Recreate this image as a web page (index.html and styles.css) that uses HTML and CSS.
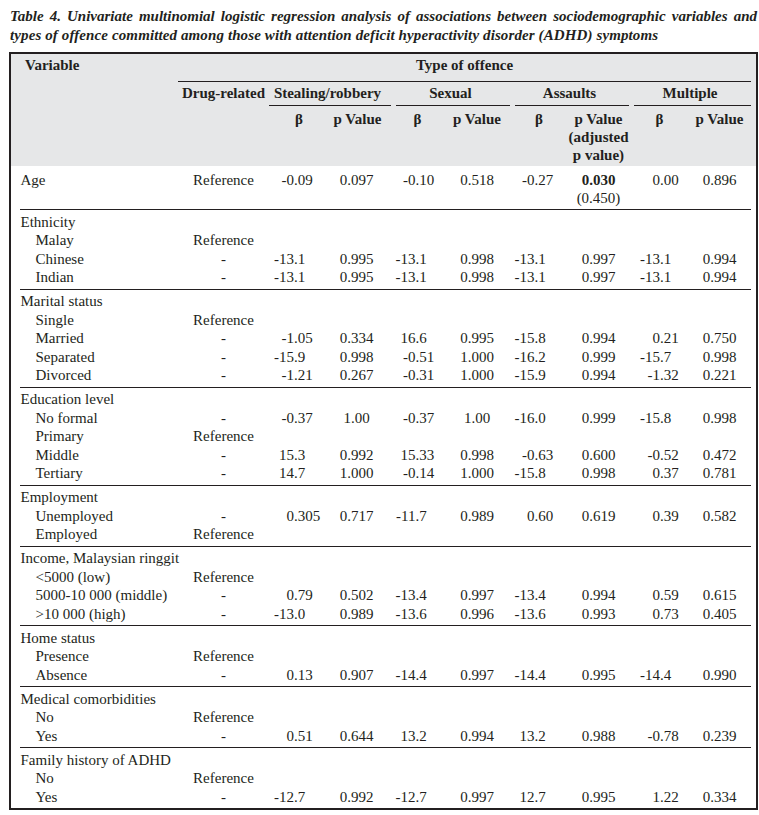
FILE: index.html
```html
<!DOCTYPE html>
<html lang="en">
<head>
<meta charset="utf-8">
<title>Table 4</title>
<link rel="stylesheet" href="styles.css">
</head>
<body>
<div class="page">
  <p class="title"><span class="l1">Table 4. Univariate multinomial logistic regression analysis of associations between sociodemographic variables and</span><span class="l2">types of offence committed among those with attention deficit hyperactivity disorder (ADHD) symptoms</span></p>
  <div class="box">
    <div class="head">
      <table class="t">
        <colgroup>
          <col class="w1"><col class="w2"><col class="w3"><col class="w4"><col class="w5"><col class="w6"><col class="w7"><col class="w8"><col class="w9"><col class="w10">
        </colgroup>
        <tr class="r1">
          <th class="var" rowspan="3">Variable</th>
          <th class="too" colspan="9">Type of offence</th>
        </tr>
        <tr class="r2">
          <th class="drug" rowspan="2">Drug-related</th>
          <th colspan="2"><div class="gl first">Stealing/robbery</div></th>
          <th colspan="2"><div class="gl">Sexual</div></th>
          <th colspan="2"><div class="gl">Assaults</div></th>
          <th colspan="2"><div class="gl last">Multiple</div></th>
        </tr>
        <tr class="r3">
          <th class="hb1">β</th>
          <th class="hp1">p Value</th>
          <th>β</th>
          <th>p Value</th>
          <th>β</th>
          <th>p Value<br>(adjusted<br>p value)</th>
          <th>β</th>
          <th>p Value</th>
        </tr>
      </table>
    </div>
    <div class="body">
      <table class="t">
        <colgroup>
          <col class="w1"><col class="w2"><col class="w3"><col class="w4"><col class="w5"><col class="w6"><col class="w7"><col class="w8"><col class="w9"><col class="w10">
        </colgroup>
        <tbody class="age">
          <tr><td class="v">Age</td><td class="c">Reference</td><td class="b"><span class="ip">-0</span>.09</td><td class="p">0.097</td><td class="b"><span class="ip">-0</span>.10</td><td class="p">0.518</td><td class="b"><span class="ip">-0</span>.27</td><td class="p"><b>0.030</b><br>(0.450)</td><td class="b"><span class="ip">0</span>.00</td><td class="p">0.896</td></tr>
        </tbody>
        <tbody>
          <tr><td class="v" colspan="10">Ethnicity</td></tr>
          <tr><td class="s">Malay</td><td class="c">Reference</td><td colspan="8"></td></tr>
          <tr><td class="s">Chinese</td><td class="c">-</td><td class="b"><span class="ip">-13</span>.1</td><td class="p">0.995</td><td class="b"><span class="ip">-13</span>.1</td><td class="p">0.998</td><td class="b"><span class="ip">-13</span>.1</td><td class="p">0.997</td><td class="b"><span class="ip">-13</span>.1</td><td class="p">0.994</td></tr>
          <tr><td class="s">Indian</td><td class="c">-</td><td class="b"><span class="ip">-13</span>.1</td><td class="p">0.995</td><td class="b"><span class="ip">-13</span>.1</td><td class="p">0.998</td><td class="b"><span class="ip">-13</span>.1</td><td class="p">0.997</td><td class="b"><span class="ip">-13</span>.1</td><td class="p">0.994</td></tr>
        </tbody>
        <tbody>
          <tr><td class="v" colspan="10">Marital status</td></tr>
          <tr><td class="s">Single</td><td class="c">Reference</td><td colspan="8"></td></tr>
          <tr><td class="s">Married</td><td class="c">-</td><td class="b"><span class="ip">-1</span>.05</td><td class="p">0.334</td><td class="b"><span class="ip">16</span>.6</td><td class="p">0.995</td><td class="b"><span class="ip">-15</span>.8</td><td class="p">0.994</td><td class="b"><span class="ip">0</span>.21</td><td class="p">0.750</td></tr>
          <tr><td class="s">Separated</td><td class="c">-</td><td class="b"><span class="ip">-15</span>.9</td><td class="p">0.998</td><td class="b"><span class="ip">-0</span>.51</td><td class="p">1.000</td><td class="b"><span class="ip">-16</span>.2</td><td class="p">0.999</td><td class="b"><span class="ip">-15</span>.7</td><td class="p">0.998</td></tr>
          <tr><td class="s">Divorced</td><td class="c">-</td><td class="b"><span class="ip">-1</span>.21</td><td class="p">0.267</td><td class="b"><span class="ip">-0</span>.31</td><td class="p">1.000</td><td class="b"><span class="ip">-15</span>.9</td><td class="p">0.994</td><td class="b"><span class="ip">-1</span>.32</td><td class="p">0.221</td></tr>
        </tbody>
        <tbody>
          <tr><td class="v" colspan="10">Education level</td></tr>
          <tr><td class="s">No formal</td><td class="c">-</td><td class="b"><span class="ip">-0</span>.37</td><td class="p">1.00</td><td class="b"><span class="ip">-0</span>.37</td><td class="p">1.00</td><td class="b"><span class="ip">-16</span>.0</td><td class="p">0.999</td><td class="b"><span class="ip">-15</span>.8</td><td class="p">0.998</td></tr>
          <tr><td class="s">Primary</td><td class="c">Reference</td><td colspan="8"></td></tr>
          <tr><td class="s">Middle</td><td class="c">-</td><td class="b"><span class="ip">15</span>.3</td><td class="p">0.992</td><td class="b"><span class="ip">15</span>.33</td><td class="p">0.998</td><td class="b"><span class="ip">-0</span>.63</td><td class="p">0.600</td><td class="b"><span class="ip">-0</span>.52</td><td class="p">0.472</td></tr>
          <tr><td class="s">Tertiary</td><td class="c">-</td><td class="b"><span class="ip">14</span>.7</td><td class="p">1.000</td><td class="b"><span class="ip">-0</span>.14</td><td class="p">1.000</td><td class="b"><span class="ip">-15</span>.8</td><td class="p">0.998</td><td class="b"><span class="ip">0</span>.37</td><td class="p">0.781</td></tr>
        </tbody>
        <tbody>
          <tr><td class="v" colspan="10">Employment</td></tr>
          <tr><td class="s">Unemployed</td><td class="c">-</td><td class="b"><span class="ip">0</span>.305</td><td class="p">0.717</td><td class="b"><span class="ip">-11</span>.7</td><td class="p">0.989</td><td class="b"><span class="ip">0</span>.60</td><td class="p">0.619</td><td class="b"><span class="ip">0</span>.39</td><td class="p">0.582</td></tr>
          <tr><td class="s">Employed</td><td class="c">Reference</td><td colspan="8"></td></tr>
        </tbody>
        <tbody>
          <tr><td class="v" colspan="10">Income, Malaysian ringgit</td></tr>
          <tr><td class="s">&lt;5000 (low)</td><td class="c">Reference</td><td colspan="8"></td></tr>
          <tr><td class="s">5000-10 000 (middle)</td><td class="c">-</td><td class="b"><span class="ip">0</span>.79</td><td class="p">0.502</td><td class="b"><span class="ip">-13</span>.4</td><td class="p">0.997</td><td class="b"><span class="ip">-13</span>.4</td><td class="p">0.994</td><td class="b"><span class="ip">0</span>.59</td><td class="p">0.615</td></tr>
          <tr><td class="s">&gt;10 000 (high)</td><td class="c">-</td><td class="b"><span class="ip">-13</span>.0</td><td class="p">0.989</td><td class="b"><span class="ip">-13</span>.6</td><td class="p">0.996</td><td class="b"><span class="ip">-13</span>.6</td><td class="p">0.993</td><td class="b"><span class="ip">0</span>.73</td><td class="p">0.405</td></tr>
        </tbody>
        <tbody>
          <tr><td class="v" colspan="10">Home status</td></tr>
          <tr><td class="s">Presence</td><td class="c">Reference</td><td colspan="8"></td></tr>
          <tr><td class="s">Absence</td><td class="c">-</td><td class="b"><span class="ip">0</span>.13</td><td class="p">0.907</td><td class="b"><span class="ip">-14</span>.4</td><td class="p">0.997</td><td class="b"><span class="ip">-14</span>.4</td><td class="p">0.995</td><td class="b"><span class="ip">-14</span>.4</td><td class="p">0.990</td></tr>
        </tbody>
        <tbody>
          <tr><td class="v" colspan="10">Medical comorbidities</td></tr>
          <tr><td class="s">No</td><td class="c">Reference</td><td colspan="8"></td></tr>
          <tr><td class="s">Yes</td><td class="c">-</td><td class="b"><span class="ip">0</span>.51</td><td class="p">0.644</td><td class="b"><span class="ip">13</span>.2</td><td class="p">0.994</td><td class="b"><span class="ip">13</span>.2</td><td class="p">0.988</td><td class="b"><span class="ip">-0</span>.78</td><td class="p">0.239</td></tr>
        </tbody>
        <tbody>
          <tr><td class="v" colspan="10">Family history of ADHD</td></tr>
          <tr><td class="s">No</td><td class="c">Reference</td><td colspan="8"></td></tr>
          <tr><td class="s">Yes</td><td class="c">-</td><td class="b"><span class="ip">-12</span>.7</td><td class="p">0.992</td><td class="b"><span class="ip">-12</span>.7</td><td class="p">0.997</td><td class="b"><span class="ip">12</span>.7</td><td class="p">0.995</td><td class="b"><span class="ip">1</span>.22</td><td class="p">0.334</td></tr>
        </tbody>
      </table>
    </div>
  </div>
</div>
</body>
</html>
```
FILE: styles.css
```css
html, body {
  margin: 0;
  padding: 0;
  background: #fff;
}
body {
  color: #231f20;
  font-family: "Liberation Serif", "Times New Roman", serif;
  font-size: 15px;
}
.page {
  width: 749px;
  margin-left: 9px;
  padding-top: 6.5px;
}
.title {
  margin: 0 1px 7.5px 1px;
  font-weight: bold;
  font-style: italic;
  line-height: 19px;
  letter-spacing: 0.11px;
}
.title .l1 {
  display: block;
  text-align: justify;
  text-align-last: justify;
  letter-spacing: 0;
}
.title .l2 {
  display: block;
}
.box {
  border: 2px solid #231f20;
}
.head {
  background: #e6e7e8;
  padding: 0 5px 0 9px;
}
.body {
  padding: 0 5px 0 9px;
}
.t {
  width: 731px;
  table-layout: fixed;
  border-collapse: collapse;
  border-spacing: 0;
}
.w1 { width: 158px; }
.w2 { width: 91px; }
.w3 { width: 55px; }
.w4 { width: 69px; }
.w5 { width: 49px; }
.w6 { width: 70px; }
.w7 { width: 54px; }
.w8 { width: 65px; }
.w9 { width: 57px; }
.w10 { width: 63px; }

th {
  padding: 0;
  font-weight: bold;
  line-height: 18.5px;
  vertical-align: top;
  text-align: center;
  white-space: nowrap;
}
.r1 th {
  padding-top: 2.4px;
  padding-bottom: 6px;
}
.r1 .var {
  text-align: left;
  padding-left: 5px;
}
.r1 .too {
  border-bottom: 1px solid #231f20;
}
.r2 th {
  padding-top: 2px;
}
.gl {
  margin: 0 2px 0 3px;
  padding: 0 5px 2.8px 0;
  border-bottom: 1px solid #231f20;
}
.gl.first { margin-left: 0; }
.gl.last { margin-right: 0; }
.r3 th {
  padding-top: 3.5px;
  padding-bottom: 1.4px;
  line-height: 18.3px;
}
.r3 .hb1 { padding-left: 5px; }
.r3 .hp1 { padding-right: 2px; }

td {
  padding: 0;
  line-height: 18.5px;
  vertical-align: top;
  white-space: nowrap;
}
tbody + tbody {
  border-top: 1px solid #231f20;
}
tbody tr:first-child td { padding-top: 2.5px; }
tbody tr:last-child td { padding-bottom: 2px; }
tbody.age tr td {
  padding-top: 5px;
  padding-bottom: 1.5px;
}
td.v { padding-left: 0.5px; }
td.s { padding-left: 15.5px; }
td.c { text-align: center; }
td.p { text-align: center; }
td.p:nth-child(4) { padding-right: 4px; }
td.b { text-align: left; }
.ip {
  display: inline-block;
  text-align: right;
}
td:nth-child(3) .ip { width: 25px; }
td:nth-child(5) .ip { width: 22.5px; }
td:nth-child(7) .ip { width: 22.5px; }
td:nth-child(9) .ip { width: 29px; }
```
